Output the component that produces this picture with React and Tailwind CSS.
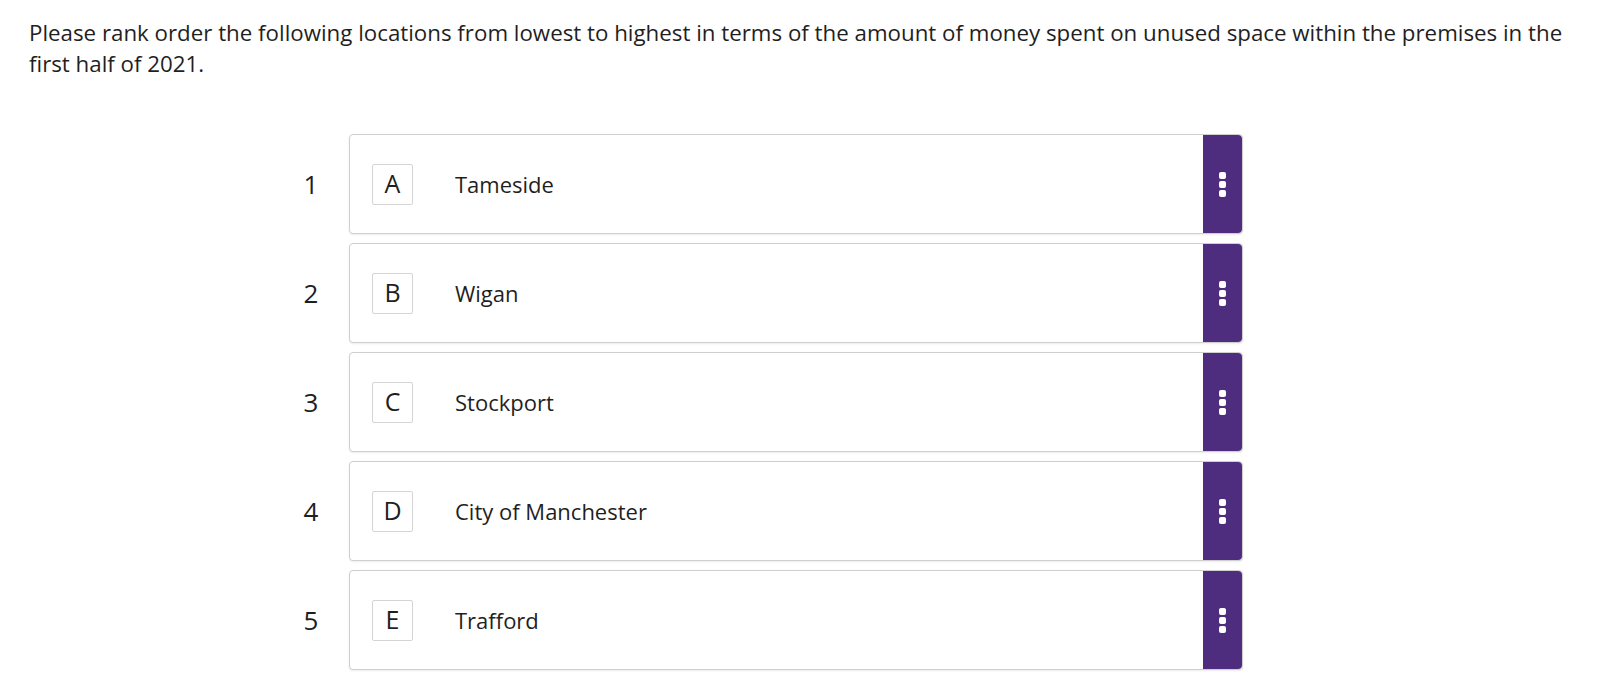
const items = [
  { letter: 'A', label: 'Tameside' },
  { letter: 'B', label: 'Wigan' },
  { letter: 'C', label: 'Stockport' },
  { letter: 'D', label: 'City of Manchester' },
  { letter: 'E', label: 'Trafford' },
];

function Handle() {
  return (
    <div className="w-[39px] self-stretch bg-[#4e2d7e] rounded-r-[4px] flex items-center justify-center">
      <div className="flex flex-col gap-[2px]">
        <span className="block w-[7px] h-[7px] rounded-[2px] bg-white" />
        <span className="block w-[7px] h-[7px] rounded-[2px] bg-white" />
        <span className="block w-[7px] h-[7px] rounded-[2px] bg-white" />
      </div>
    </div>
  );
}

function RankRow({ rank, letter, label }) {
  return (
    <li className="flex items-center">
      <div className="w-[40px] text-center text-[26px] text-[#1f1f1f] mr-[18px]">{rank}</div>
      <div className="w-[894px] h-[100px] flex items-stretch bg-white border border-[#cfcfcf] rounded-[4px] shadow-[0_1px_2px_rgba(0,0,0,0.08)]">
        <div className="flex-1 flex items-center pl-[22px]">
          <div className="w-[41px] h-[41px] flex items-center justify-center border border-[#d4d4d4] rounded-[2px] text-[25px] text-[#1f1f1f]">
            {letter}
          </div>
          <span className="ml-[42px] text-[22px] text-[#1f1f1f]">{label}</span>
        </div>
        <Handle />
      </div>
    </li>
  );
}

export default function App() {
  return (
    <div className="min-h-screen bg-white font-['Open_Sans',sans-serif] text-[#1f1f1f]">
      <p className="pl-[29px] pr-[20px] pt-[17px] text-[22.3px] leading-[31px]">
        Please rank order the following locations from lowest to highest in terms of the amount of money spent on unused space within the premises in the first half of 2021.
      </p>
      <ol className="mt-[55px] pl-[291px] flex flex-col gap-[9px]">
        {items.map((item, i) => (
          <RankRow key={item.letter} rank={i + 1} letter={item.letter} label={item.label} />
        ))}
      </ol>
    </div>
  );
}
